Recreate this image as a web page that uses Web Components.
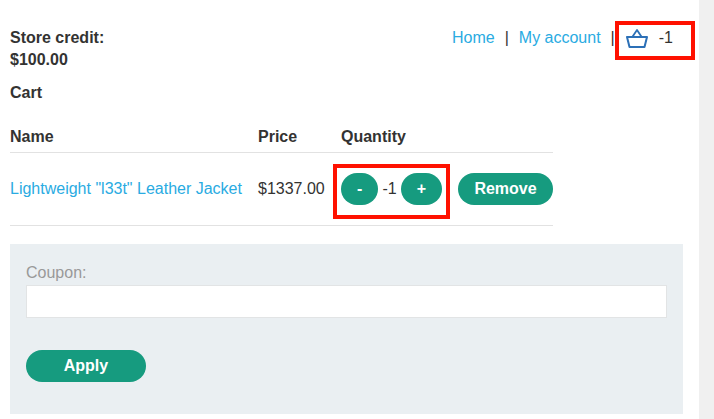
<!DOCTYPE html>
<html lang="en">
<head>
<meta charset="utf-8">
<title>Cart</title>
<style>
html, body { margin: 0; height: 100%; overflow: hidden; }
body { font: 16px/22px "Liberation Sans", Arial, sans-serif; color: #333332; background: #fff; }
</style>
</head>
<body>
<shop-page>
  <shop-header slot="header"></shop-header>
  <cart-table></cart-table>
  <coupon-form></coupon-form>
</shop-page>
<script>
function define(name, markup) {
  customElements.define(name, class extends HTMLElement {
    constructor() {
      super();
      const t = document.createElement('template');
      t.innerHTML = markup;
      this.attachShadow({ mode: 'open' }).appendChild(t.content.cloneNode(true));
    }
  });
}

define('pill-button', `
<style>
:host { display: inline-block; }
button { display: block; box-sizing: border-box; width: 100%; height: 32px; margin: 0; padding: 0 16px; border: 0;
  border-radius: 16px; background: #169b7f; color: #fff; font: bold 16px/32px "Liberation Sans", Arial, sans-serif; text-align: center; }
</style>
<button><slot></slot></button>`);

/* Red frame drawn over the content it marks, without taking up space */
define('mark-frame', `
<style>
:host { display: block; position: absolute; box-sizing: border-box; border: 4px solid #ff1100; pointer-events: none; }
</style>`);

define('basket-icon', `
<style>
:host { display: block; width: 22px; height: 21px; }
svg { display: block; }
</style>
<svg width="22" height="21" viewBox="0 0 22 21" fill="none" stroke="#2c70b7" stroke-width="2" stroke-linejoin="round">
<path d="M1 9H21L18.5 19H3.5Z"/><path d="M6.3 9L11 2L15.7 9" stroke-width="1.8"/>
</svg>`);

define('shop-header', `
<style>
:host { display: flex; justify-content: space-between; align-items: flex-start; }
.credit { font-weight: bold; }
nav { display: flex; gap: 10px; margin-right: 10px; white-space: nowrap; }
a { color: #29abe2; text-decoration: none; }
.basket { position: relative; display: flex; gap: 11px; margin-left: 1px; }
.basket basket-icon { margin-top: 1px; }
mark-frame { left: -11px; top: -6px; width: 80px; height: 39px; }
</style>
<div class="credit">Store credit:<br>$100.00</div>
<nav><a>Home</a><span>|</span><a>My account</a><span>|</span>
<div class="basket"><basket-icon></basket-icon><span>-1</span><mark-frame></mark-frame></div></nav>`);

define('cart-table', `
<style>
:host { display: block; width: 543px; margin-top: 11px; }
.title, .head { font-weight: bold; }
.row { display: grid; grid-template-columns: 232px 67px 101px 95px; column-gap: 16px; align-items: center; border-bottom: 1px solid #e2e2e2; white-space: nowrap; }
.head { margin-top: 22px; padding-bottom: 4px; }
.item { height: 72px; }
a { color: #29abe2; text-decoration: none; }
.qty { position: relative; display: flex; justify-content: space-between; align-items: center; }
mark-frame { left: -8px; top: -9px; width: 117px; height: 55px; }
</style>
<div class="title">Cart</div>
<div class="row head"><span>Name</span><span>Price</span><span>Quantity</span><span></span></div>
<div class="row item">
<a>Lightweight "l33t" Leather Jacket</a><span>$1337.00</span>
<div class="qty"><pill-button>-</pill-button><span>-1</span><pill-button>+</pill-button><mark-frame></mark-frame></div>
<pill-button>Remove</pill-button>
</div>`);

define('coupon-form', `
<style>
:host { display: block; box-sizing: border-box; height: 170px; margin-top: 18px; padding: 18px 16px; background: #eaeff2; }
label { display: block; color: #999; }
input { display: block; box-sizing: border-box; width: 100%; height: 33px; margin: 1px 0 32px; padding: 0 8px; border: 1px solid #e2e4e5; border-radius: 0; background: #fff; font: inherit; }
pill-button { width: 120px; }
</style>
<label for="c">Coupon:</label><input id="c" type="text"><pill-button>Apply</pill-button>`);

define('shop-page', `
<style>
:host { display: flex; height: 419px; }
main { flex: 1; min-width: 0; padding: 27px 16px 0 10px; }
aside { width: 15px; background: #f0f0f0; }
</style>
<main><slot name="header"></slot><slot></slot></main><aside></aside>`);
</script>
</body>
</html>
